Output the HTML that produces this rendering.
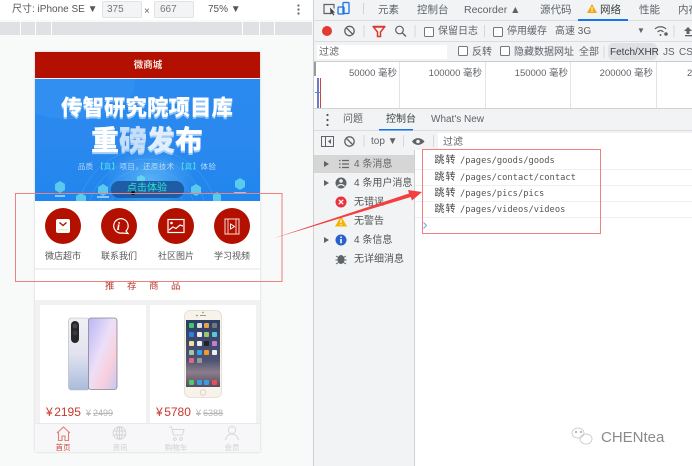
<!DOCTYPE html>
<html lang="zh"><head><meta charset="utf-8"><title>DevTools</title>
<style>
html,body{margin:0;padding:0}
body{width:692px;height:466px;overflow:hidden;position:relative;background:#fff;font-family:"Liberation Sans","Noto Sans CJK SC",sans-serif;color:#555}
.a{position:absolute;white-space:nowrap}
.t{position:absolute;white-space:nowrap;line-height:1;filter:blur(.3px)}
svg{position:absolute;overflow:visible}
.c{text-align:center;transform:translateX(-50%)}
.mono{font-family:"DejaVu Sans Mono","Noto Sans CJK SC",monospace}
.cb{position:absolute;width:8px;height:8px;border:1px solid #777;border-radius:1.5px;background:#fff}
</style></head><body>

<!-- Left emulation panel -->
<div class="a" style="left:0;top:0;width:313px;height:466px;background:#f8f9f9"></div>
<div class="a" style="left:0;top:0;width:313px;height:20px;background:#fff"></div>
<div class="a" style="left:0;top:22px;width:312px;height:13px;background:#dfe1e5"></div>
<div class="a" style="left:20px;top:22px;width:1px;height:13px;background:#fff"></div>
<div class="a" style="left:35px;top:22px;width:1px;height:13px;background:#fff"></div>
<div class="a" style="left:51px;top:22px;width:1px;height:13px;background:#fff"></div>
<div class="a" style="left:242px;top:22px;width:1px;height:13px;background:#fff"></div>
<div class="a" style="left:259px;top:22px;width:1px;height:13px;background:#fff"></div>
<div class="a" style="left:274px;top:22px;width:1px;height:13px;background:#fff"></div>
<div class="t" style="left:12px;top:5px;font-size:10px;color:#555">尺寸: iPhone SE ▼</div>
<div class="a" style="left:102px;top:1px;width:38px;height:15px;background:#f3f4f5;border:1px solid #e2e3e5;border-radius:2px"></div>
<div class="t" style="left:107px;top:5px;font-size:10px;color:#777">375</div>
<div class="t" style="left:144px;top:7px;font-size:10px;color:#666">×</div>
<div class="a" style="left:154px;top:1px;width:38px;height:15px;background:#f3f4f5;border:1px solid #e2e3e5;border-radius:2px"></div>
<div class="t" style="left:160px;top:5px;font-size:10px;color:#777">667</div>
<div class="t" style="left:208px;top:5px;font-size:10px;color:#555">75% ▼</div>
<svg style="left:296px;top:4px" width="6" height="12"><circle cx="2.5" cy="1.5" r="1.1" fill="#666"/><circle cx="2.5" cy="5.5" r="1.1" fill="#666"/><circle cx="2.5" cy="9.5" r="1.1" fill="#666"/></svg>

<!-- Phone -->
<div class="a" style="left:35px;top:52px;width:225px;height:400px;background:#f1f1f1;box-shadow:0 0 2px rgba(0,0,0,.18)"></div>
<div class="a" style="left:35px;top:52px;width:225px;height:26px;background:#b31000"></div>
<div class="t c" style="left:148px;top:61px;font-size:9.5px;font-weight:bold;color:#f6e0dc">微商城</div>

<!-- Banner -->
<div class="a" style="left:35px;top:79px;width:225px;height:122px;overflow:hidden;background:linear-gradient(180deg,#2b8af0 0%,#2a88ee 55%,#1f86ee 100%)">
  <div class="a" style="left:-30px;top:-30px;width:130px;height:70px;border-radius:50%;background:#328ff2"></div>
  <div class="a" style="left:70px;top:70px;width:90px;height:60px;background:radial-gradient(ellipse at center,rgba(130,210,250,.55),rgba(60,150,240,0) 70%)"></div>
  <svg style="left:0;top:0" width="225" height="122">
    <g fill="none" stroke="#64b8f5" stroke-width=".4" opacity=".7"><circle cx="112" cy="140" r="40"/><circle cx="112" cy="140" r="50"/><circle cx="112" cy="140" r="60"/><circle cx="112" cy="140" r="70"/></g>
    <g fill="#6fe0ee" opacity=".75">
      <polygon points="25,102 30,105 30,111 25,114 20,111 20,105"/>
      <polygon points="46,114 51,117 51,122 41,122 41,117"/>
      <polygon points="68,105 73,108 73,114 68,117 63,114 63,108"/>
      <polygon points="106,96 110,98 110,103 106,105 102,103 102,98"/>
      <polygon points="161,105 166,108 166,114 161,117 156,114 156,108"/>
      <polygon points="182,113 186,116 186,122 178,122 178,116"/>
      <polygon points="205,99 210,102 210,108 205,111 200,108 200,102"/>
    </g>
    <g fill="#bfe6fa" opacity=".7"><rect x="20" y="116" width="10" height="2"/><rect x="62" y="117" width="12" height="2"/><rect x="199" y="113" width="12" height="2"/></g>
  </svg>
  <div class="t c" style="left:112px;top:19px;font-size:21.5px;font-weight:900;color:#fff;text-shadow:0 2px 0 #8cc3f7">传智研究院项目库</div>
  <div class="t c" style="left:112px;top:48px;font-size:28px;font-weight:900;color:#fff;text-shadow:0 2px 0 #9ccbf7">重<span style="color:#c7def9">磅</span><span style="color:#e3eefc">发</span>布</div>
  <div class="t c" style="left:112px;top:84px;font-size:7.5px;color:#b9dcf9;letter-spacing:.35px">品质 <span style="color:#4fe4e6">【真】</span>项目，还原技术 <span style="color:#4fe4e6">【真】</span>体验</div>
  <div class="a" style="left:76px;top:102px;width:73px;height:17px;border-radius:8px;background:#1e5da6"></div>
  <div class="t c" style="left:112px;top:105px;font-size:10px;color:#2ce6cc">点击体验</div>
  <div class="a" style="left:96px;top:112px;width:4px;height:4px;border-radius:50%;background:#111"></div>
</div>

<!-- Nav -->
<div class="a" style="left:35px;top:201px;width:225px;height:67px;background:#fff"></div>
<div class="a" style="left:45px;top:208px;width:36px;height:36px;border-radius:50%;background:#b31000"></div>
<div class="a" style="left:101px;top:208px;width:36px;height:36px;border-radius:50%;background:#b31000"></div>
<div class="a" style="left:158px;top:208px;width:36px;height:36px;border-radius:50%;background:#b31000"></div>
<div class="a" style="left:214px;top:208px;width:36px;height:36px;border-radius:50%;background:#b31000"></div>
<svg style="left:0;top:0" width="300" height="260">
  <rect x="56" y="219" width="14" height="14" rx="2" fill="#fff"/>
  <path d="M59.5 222.5l3.5 3 3.5-3" fill="none" stroke="#b31000" stroke-width="1.4"/>
  <rect x="58" y="229" width="10" height="1.5" fill="#eeb"/>
  <path d="M122 233a7.2 7.200 0 1 1 4-2l2 2.500z" fill="none" stroke="#fff" stroke-width="1.200"/>
  <rect x="168" y="219.500" width="16" height="13" fill="none" stroke="#fff" stroke-width="1.200"/>
  <circle cx="171.500" cy="223" r="1.300" fill="#fff"/>
  <path d="M169 230l4-3 3 1.500 4-3.500 3 1" fill="none" stroke="#fff" stroke-width="1.200"/>
  <rect x="225" y="219" width="14" height="15" fill="none" stroke="#f6c9c4" stroke-width="1.100"/>
  <path d="M228 219v15M236 219v15" stroke="#f6c9c4" stroke-width="1"/>
  <path d="M230.500 224l4 2.500-4 2.500z" fill="none" stroke="#fff" stroke-width="1"/>
</svg>
<div class="t" style="left:116.800px;top:220px;font-size:12px;font-style:italic;font-weight:bold;color:#fff;font-family:'Liberation Serif',serif">i</div>
<div class="t c" style="left:63px;top:252px;font-size:9px;color:#555">微店超市</div>
<div class="t c" style="left:119px;top:252px;font-size:9px;color:#555">联系我们</div>
<div class="t c" style="left:176px;top:252px;font-size:9px;color:#555">社区图片</div>
<div class="t c" style="left:232px;top:252px;font-size:9px;color:#555">学习视频</div>

<!-- Recommend -->
<div class="a" style="left:35px;top:270px;width:225px;height:30px;background:#fff"></div>
<div class="t c" style="left:143px;top:281.500px;font-size:9.500px;color:#b8352a;letter-spacing:12.500px;text-indent:12px">推荐商品</div>

<!-- Cards -->
<div class="a" style="left:40px;top:305px;width:106px;height:118px;background:#fff"></div>
<div class="a" style="left:150px;top:305px;width:106px;height:118px;background:#fff"></div>

<!-- Phones -->
<svg style="left:0;top:0" width="300" height="420">
  <defs>
    <linearGradient id="b1" x1="0" y1="0" x2="0" y2="1"><stop offset="0" stop-color="#f1eff4"/><stop offset=".5" stop-color="#e2e2f0"/><stop offset="1" stop-color="#a9bcdb"/></linearGradient>
    <linearGradient id="s1" x1="0" y1="0" x2="1" y2="1"><stop offset="0" stop-color="#b9b6f4"/><stop offset=".45" stop-color="#ecdff8"/><stop offset=".7" stop-color="#f9d0dc"/><stop offset="1" stop-color="#c9c6f2"/></linearGradient>
    <linearGradient id="s2" x1="0" y1="0" x2="0" y2="1"><stop offset="0" stop-color="#2b3f66"/><stop offset=".6" stop-color="#4d5272"/><stop offset=".78" stop-color="#8b7d8c"/><stop offset="1" stop-color="#544c5c"/></linearGradient>
  </defs>
  <rect x="68.500" y="318" width="21" height="72" rx="3" fill="url(#b1)" stroke="#b4b7c4" stroke-width=".6"/>
  <rect x="71" y="321" width="8" height="22" rx="4" fill="#26262a"/>
  <circle cx="75" cy="326" r="2.400" fill="#444"/><circle cx="75" cy="333" r="2.400" fill="#3a3a3e"/>
  <rect x="88.500" y="318" width="28.500" height="71.500" rx="2.500" fill="url(#s1)" stroke="#85868f" stroke-width=".8"/>
  <rect x="184.500" y="310.500" width="37" height="87" rx="5.500" fill="#f7f3ea" stroke="#e2dccc" stroke-width=".8"/>
  <rect x="186" y="320" width="34" height="67" fill="url(#s2)"/>
  <circle cx="203" cy="392.500" r="2.800" fill="none" stroke="#cfc9ba" stroke-width=".7"/>
  <rect x="200" y="315" width="6" height="1" fill="#999"/><circle cx="203" cy="312.500" r=".7" fill="#777"/><circle cx="197" cy="315.500" r=".8" fill="#777"/>
  <g>
    <rect x="189" y="323" width="5" height="5" rx="1" fill="#44c767"/><rect x="197" y="323" width="5" height="5" rx="1" fill="#ddd"/><rect x="204" y="323" width="5" height="5" rx="1" fill="#e8a04c"/><rect x="212" y="323" width="5" height="5" rx="1" fill="#777"/>
    <rect x="189" y="332" width="5" height="5" rx="1" fill="#2f7fe0"/><rect x="197" y="332" width="5" height="5" rx="1" fill="#eee"/><rect x="204" y="332" width="5" height="5" rx="1" fill="#9acb6a"/><rect x="212" y="332" width="5" height="5" rx="1" fill="#5cc6d6"/>
    <rect x="189" y="341" width="5" height="5" rx="1" fill="#f0e0a0"/><rect x="197" y="341" width="5" height="5" rx="1" fill="#eee"/><rect x="204" y="341" width="5" height="5" rx="1" fill="#222"/><rect x="212" y="341" width="5" height="5" rx="1" fill="#c77cc9"/>
    <rect x="189" y="350" width="5" height="5" rx="1" fill="#a8c4a0"/><rect x="197" y="350" width="5" height="5" rx="1" fill="#35a4e8"/><rect x="204" y="350" width="5" height="5" rx="1" fill="#f39a2b"/><rect x="212" y="350" width="5" height="5" rx="1" fill="#f2eef0"/>
    <rect x="189" y="358" width="5" height="5" rx="1" fill="#db6a7a"/><rect x="197" y="358" width="5" height="5" rx="1" fill="#999"/>
    <rect x="189" y="380" width="5" height="5" rx="1" fill="#4fc96a"/><rect x="197" y="380" width="5" height="5" rx="1" fill="#3a9be8"/><rect x="204" y="380" width="5" height="5" rx="1" fill="#3a9be8"/><rect x="212" y="380" width="5" height="5" rx="1" fill="#e94c5c"/>
  </g>
</svg>

<div class="t" style="left:46px;top:406px;font-size:12px;color:#c8372a">¥<span style="margin-left:1.500px">2195</span></div>
<div class="t" style="left:86px;top:408.500px;font-size:9px;color:#b5b5b5;text-decoration:line-through">¥<span style="margin-left:2px">2499</span></div>
<div class="t" style="left:156px;top:406px;font-size:12px;color:#c8372a">¥<span style="margin-left:1.500px">5780</span></div>
<div class="t" style="left:196px;top:408.500px;font-size:9px;color:#b5b5b5;text-decoration:line-through">¥<span style="margin-left:2px">6388</span></div>

<!-- Tab bar -->
<div class="a" style="left:35px;top:423px;width:225px;height:29px;background:#f7f7f9;border-top:1px solid #e9e9e9;box-sizing:border-box"></div>
<svg style="left:0;top:0" width="300" height="460">
  <path d="M57 433l6.500-6 6.500 6M58.500 432v8.500h3.500v-4.500h3v4.500h3.500V432" fill="none" stroke="#e57f73" stroke-width="1.100"/>
  <g fill="none" stroke="#d4d4d6" stroke-width="1"><circle cx="119.500" cy="433" r="6.300"/><ellipse cx="119.500" cy="433" rx="2.800" ry="6.300"/><path d="M113.500 431h12M113.500 435h12M119.500 427v12"/></g>
  <g fill="none" stroke="#d8d8da" stroke-width="1"><path d="M169 427h2.500l2 8h9l1.500-5.500h-11.500"/><circle cx="175" cy="439" r="1.400"/><circle cx="181" cy="439" r="1.400"/></g>
  <g fill="none" stroke="#d8d8da" stroke-width="1"><circle cx="232" cy="430" r="3.600"/><path d="M225.500 440c.8-4 3.500-6 6.500-6s5.700 2 6.500 6"/></g>
</svg>
<div class="t c" style="left:63px;top:444px;font-size:7.500px;color:#c8483a">首页</div>
<div class="t c" style="left:120px;top:444px;font-size:7.500px;color:#cfcfcf">资讯</div>
<div class="t c" style="left:176px;top:444px;font-size:7.500px;color:#cfcfcf">购物车</div>
<div class="t c" style="left:232px;top:444px;font-size:7.500px;color:#cfcfcf">会员</div>

<!-- DevTools -->
<div class="a" style="left:313px;top:0;width:379px;height:150px;background:#f1f3f4;border-left:1px solid #cdcfd2;box-sizing:border-box"></div>
<div class="a" style="left:313px;top:20px;width:379px;height:1px;background:#dadce0"></div>
<div class="a" style="left:313px;top:41px;width:379px;height:1px;background:#dadce0"></div>
<div class="a" style="left:313px;top:61px;width:379px;height:1px;background:#cbcdd1"></div>

<svg style="left:0;top:0" width="692" height="150">
  <path d="M331 13.500h-7v-9h10v4" fill="none" stroke="#5f6368" stroke-width="1.200"/>
  <path d="M330 7.500l5 5-2 .3 1.500 2-1 .7-1.500-2-1.500 1z" fill="#444"/>
  <rect x="343" y="2.500" width="6" height="11" rx="1" fill="none" stroke="#1a73e8" stroke-width="1.300"/>
  <rect x="338" y="7" width="6" height="7" rx="1" fill="none" stroke="#1a73e8" stroke-width="1.300"/>
  <path d="M363.500 3v11" stroke="#cfd1d4"/>
  <polygon points="592,4 597,13 587,13" fill="#f2a90f"/>
  <rect x="591.500" y="7" width="1" height="3.500" fill="#fff"/><rect x="591.500" y="11" width="1" height="1" fill="#fff"/>
  <rect x="578" y="19" width="50" height="2" fill="#1a73e8"/>
  <circle cx="327" cy="31" r="5" fill="#e33a33"/>
  <circle cx="349.500" cy="31" r="4.700" fill="none" stroke="#5f6368" stroke-width="1.300"/><path d="M346 27.500l7 7" stroke="#5f6368" stroke-width="1.300"/>
  <path d="M364 25v12" stroke="#d5d7da"/>
  <path d="M373.500 27h11l-4 5v4.500h-3V32z" fill="none" stroke="#d93a30" stroke-width="1.500"/>
  <path d="M373 26.500h12" stroke="#d93a30" stroke-width="1.500"/>
  <circle cx="399.500" cy="30" r="3.800" fill="none" stroke="#5f6368" stroke-width="1.200"/><path d="M402.500 33l3.500 3.500" stroke="#5f6368" stroke-width="1.400"/>
  <path d="M415 25v12" stroke="#d5d7da"/><path d="M484.500 25v12" stroke="#d5d7da"/>
  <path d="M655 29c3-3 8-3 11 0M657.500 32c2-2 4-2 6 0" fill="none" stroke="#5f6368" stroke-width="1.200"/><circle cx="660.500" cy="35" r="1" fill="#5f6368"/><circle cx="666" cy="34" r="1.800" fill="#5f6368"/>
  <path d="M674 25v12" stroke="#d5d7da"/>
  <path d="M688 27l-4 4h2.500v3h3v-3h2.500z" fill="#5f6368"/><rect x="685" y="35" width="7" height="1.300" fill="#5f6368"/>
  <path d="M604 46v12" stroke="#d5d7da"/>
</svg>

<div class="t" style="left:378px;top:4.500px;font-size:10.500px;color:#5f6368">元素</div>
<div class="t" style="left:417px;top:4.500px;font-size:10.500px;color:#5f6368">控制台</div>
<div class="t" style="left:464px;top:4.500px;font-size:10.500px;color:#5f6368">Recorder ▲</div>
<div class="t" style="left:540px;top:4.500px;font-size:10.500px;color:#5f6368">源代码</div>
<div class="t" style="left:600px;top:4.500px;font-size:10.500px;color:#3c4043">网络</div>
<div class="t" style="left:639px;top:4.500px;font-size:10.500px;color:#5f6368">性能</div>
<div class="t" style="left:678px;top:4.500px;font-size:10.500px;color:#5f6368">内存</div>

<div class="cb" style="left:424px;top:27px"></div>
<div class="t" style="left:438px;top:27px;font-size:10px;color:#5f6368">保留日志</div>
<div class="cb" style="left:493px;top:27px"></div>
<div class="t" style="left:507px;top:27px;font-size:10px;color:#5f6368">停用缓存</div>
<div class="t" style="left:555px;top:27px;font-size:10px;color:#5f6368">高速 3G</div>
<div class="t" style="left:637px;top:27px;font-size:8px;color:#5f6368">▼</div>

<div class="a" style="left:317px;top:45px;width:130px;height:14px;background:#fff"></div>
<div class="t" style="left:319px;top:48px;font-size:10px;color:#666">过滤</div>
<div class="cb" style="left:458px;top:46px"></div>
<div class="t" style="left:472px;top:48px;font-size:10px;color:#5f6368">反转</div>
<div class="cb" style="left:500px;top:46px"></div>
<div class="t" style="left:514px;top:48px;font-size:10px;color:#5f6368">隐藏数据网址</div>
<div class="t" style="left:579px;top:48px;font-size:10px;color:#5f6368">全部</div>
<div class="a" style="left:608px;top:43px;width:49px;height:17px;border-radius:5px;background:#dfe1e5"></div>
<div class="t" style="left:610px;top:48px;font-size:10px;color:#3c4043">Fetch/XHR</div>
<div class="t" style="left:663px;top:48px;font-size:10px;color:#5f6368">JS</div>
<div class="t" style="left:679px;top:48px;font-size:10px;color:#5f6368">CSS</div>

<!-- Timeline -->
<div class="a" style="left:314px;top:62px;width:378px;height:46px;background:#fff"></div>
<div class="a" style="left:399px;top:62px;width:1px;height:46px;background:#e3e4e6"></div>
<div class="a" style="left:485px;top:62px;width:1px;height:46px;background:#e3e4e6"></div>
<div class="a" style="left:570px;top:62px;width:1px;height:46px;background:#e3e4e6"></div>
<div class="a" style="left:656px;top:62px;width:1px;height:46px;background:#e3e4e6"></div>
<div class="a" style="left:314px;top:62px;width:2px;height:14px;background:#9a9a9a"></div>
<div class="a" style="left:317px;top:78px;width:2px;height:30px;background:#7079c8"></div>
<div class="a" style="left:320px;top:78px;width:1px;height:30px;background:#c8443c"></div>
<div class="a" style="left:315px;top:92px;width:6px;height:1px;background:#4a90d0"></div>
<div class="t" style="right:295px;top:68.500px;font-size:9.500px;color:#5f6368">50000 毫秒</div>
<div class="t" style="right:210px;top:68.500px;font-size:9.500px;color:#5f6368">100000 毫秒</div>
<div class="t" style="right:124px;top:68.500px;font-size:9.500px;color:#5f6368">150000 毫秒</div>
<div class="t" style="right:39px;top:68.500px;font-size:9.500px;color:#5f6368">200000 毫秒</div>
<div class="t" style="left:687px;top:68.500px;font-size:9.500px;color:#5f6368">2</div>

<!-- Drawer -->
<div class="a" style="left:314px;top:108px;width:378px;height:22px;background:#f1f3f4;border-top:1px solid #cfd1d4;box-sizing:border-box"></div>
<div class="a" style="left:314px;top:130px;width:378px;height:1px;background:#dadce0"></div>
<svg style="left:0;top:0" width="692" height="160">
  <circle cx="327.500" cy="115" r="1.100" fill="#555"/><circle cx="327.500" cy="120" r="1.100" fill="#555"/><circle cx="327.500" cy="125" r="1.100" fill="#555"/>
  <rect x="379" y="129" width="34" height="1.500" fill="#1a73e8"/>
  <rect x="321.500" y="136.500" width="12" height="10" fill="none" stroke="#5f6368"/><path d="M325.500 136.500v10" stroke="#5f6368"/><path d="M331 139l-3 2.500 3 2.500z" fill="#5f6368"/>
  <circle cx="349.500" cy="141.500" r="4.700" fill="none" stroke="#5f6368" stroke-width="1.300"/><path d="M346 138l7 7" stroke="#5f6368" stroke-width="1.300"/>
  <path d="M364 135v12M403.500 135v12M433.500 135v12" stroke="#d5d7da"/>
  <path d="M412 141.500c3-4.500 9-4.500 12.500 0-3.500 4.500-9.500 4.500-12.500 0z" fill="#5f6368"/><circle cx="418" cy="141.500" r="1.800" fill="#f1f3f4"/>
</svg>
<div class="t" style="left:343px;top:115px;font-size:10px;color:#5f6368">问题</div>
<div class="t" style="left:386px;top:115px;font-size:10px;color:#3c4043">控制台</div>
<div class="t" style="left:431px;top:115px;font-size:10px;color:#5f6368">What's New</div>
<div class="t" style="left:371px;top:137px;font-size:10px;color:#5f6368">top ▼</div>
<div class="a" style="left:438px;top:133px;width:254px;height:17px;background:#fff"></div>
<div class="t" style="left:443px;top:137.500px;font-size:10px;color:#666">过滤</div>

<!-- Sidebar -->
<div class="a" style="left:313px;top:150px;width:102px;height:316px;background:#f1f3f4;border-left:1px solid #cdcfd2;border-right:1px solid #cdcfd2;box-sizing:border-box"></div>
<div class="a" style="left:314px;top:155px;width:100px;height:18px;background:#d6d6d6"></div>
<svg style="left:0;top:0" width="440" height="280">
  <path d="M324 161l5 3-5 3zM324 180l5 3-5 3zM324 237l5 3-5 3z" fill="#5f6368"/>
  <path d="M339 160.500h1.500M339 164h1.500M339 167.500h1.500M342 160.500h7M342 164h7M342 167.500h7" stroke="#666" stroke-width="1.200"/>
  <circle cx="341" cy="183" r="5.500" fill="#5f6368"/><circle cx="341" cy="181" r="1.800" fill="#f1f3f4"/><path d="M337.500 186.500c1-2.500 6-2.500 7 0" stroke="#f1f3f4" fill="none" stroke-width="1.200"/>
  <circle cx="341" cy="202" r="5.500" fill="#e8323c"/><path d="M338.800 199.800l4.400 4.400M343.200 199.800l-4.400 4.400" stroke="#fff" stroke-width="1.300"/>
  <polygon points="341,216 347,226.500 335,226.500" fill="#f4b400"/><rect x="340.400" y="219.500" width="1.200" height="3.500" fill="#fff"/><rect x="340.400" y="224" width="1.200" height="1.200" fill="#fff"/>
  <circle cx="341" cy="240" r="5.500" fill="#2a5fd0"/><rect x="340.200" y="239" width="1.600" height="4.200" fill="#fff"/><rect x="340.200" y="236.500" width="1.600" height="1.500" fill="#fff"/>
  <ellipse cx="341" cy="259.500" rx="3.500" ry="4.500" fill="#5f6368"/><path d="M336 256l2.500 1.500M346 256l-2.500 1.500M335.500 260h3M343.500 260h3M336 264l2.500-1.500M346 264l-2.500-1.500" stroke="#5f6368"/>
</svg>
<div class="t" style="left:354px;top:160px;font-size:10px;color:#666">4 条消息</div>
<div class="t" style="left:354px;top:179px;font-size:10px;color:#555">4 条用户消息</div>
<div class="t" style="left:354px;top:198px;font-size:10px;color:#555">无错误</div>
<div class="t" style="left:354px;top:217px;font-size:10px;color:#555">无警告</div>
<div class="t" style="left:354px;top:236px;font-size:10px;color:#555">4 条信息</div>
<div class="t" style="left:354px;top:255px;font-size:10px;color:#555">无详细消息</div>

<!-- Console -->
<div class="a" style="left:415px;top:169px;width:277px;height:1px;background:#f0f0f0"></div>
<div class="a" style="left:415px;top:185px;width:277px;height:1px;background:#f0f0f0"></div>
<div class="a" style="left:415px;top:201px;width:277px;height:1px;background:#f0f0f0"></div>
<div class="a" style="left:415px;top:217px;width:277px;height:1px;background:#f0f0f0"></div>
<div class="t" style="left:434.500px;top:156px;font-size:10px;letter-spacing:1px;color:#444">跳转</div>
<div class="t" style="left:434.500px;top:172.500px;font-size:10px;letter-spacing:1px;color:#444">跳转</div>
<div class="t" style="left:434.500px;top:188.500px;font-size:10px;letter-spacing:1px;color:#444">跳转</div>
<div class="t" style="left:434.500px;top:205px;font-size:10px;letter-spacing:1px;color:#444">跳转</div>
<div class="t mono" style="left:460px;top:157px;font-size:8.750px;color:#555">/pages/goods/goods</div>
<div class="t mono" style="left:460px;top:173.500px;font-size:8.750px;color:#555">/pages/contact/contact</div>
<div class="t mono" style="left:460px;top:189.500px;font-size:8.750px;color:#555">/pages/pics/pics</div>
<div class="t mono" style="left:460px;top:206px;font-size:8.750px;color:#555">/pages/videos/videos</div>
<svg style="left:0;top:0" width="692" height="466">
  <path d="M423.500 222.500l3 3-3 3" fill="none" stroke="#6aa5ee" stroke-width="1"/>
  <rect x="15.500" y="193.500" width="266.500" height="88" fill="none" stroke="#ee8080" stroke-width="1"/>
  <rect x="422.500" y="149.500" width="178" height="84" fill="none" stroke="#f08080" stroke-width="1"/>
  <path d="M273 238.500L409 193.500L408 190L422 192L412 200.500L410.800 197z" fill="#f24040"/>
  <!-- Watermark -->
  <g fill="none" stroke="#c4c4c4" stroke-width=".8"><ellipse cx="578" cy="433" rx="6" ry="5"/><ellipse cx="586" cy="439" rx="6" ry="5"/><circle cx="576" cy="432" r=".8" fill="#777"/><circle cx="581" cy="432" r=".8" fill="#777"/></g>
</svg>
<div class="t" style="left:601px;top:430px;font-size:15px;color:#8a8a8a">CHENtea</div>

</body></html>
